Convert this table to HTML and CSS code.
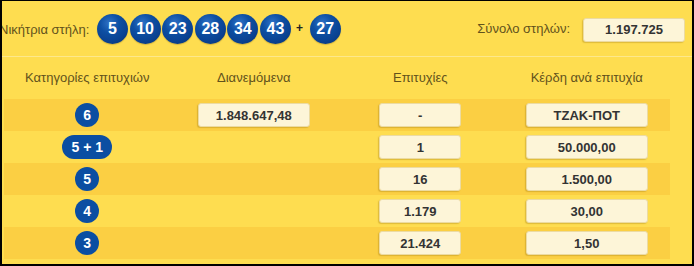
FILE: index.html
```html
<!DOCTYPE html>
<html lang="el">
<head>
<meta charset="utf-8">
<title>Κλήρωση</title>
<link rel="stylesheet" href="styles.css">
</head>
<body>
<div class="frame">
  <div class="topbar">
    <div class="label">Νικήτρια στήλη:</div>
    <div class="balls">
      <span class="ball">5</span>
      <span class="ball">10</span>
      <span class="ball">23</span>
      <span class="ball">28</span>
      <span class="ball">34</span>
      <span class="ball">43</span>
      <span class="plus">+</span>
      <span class="ball">27</span>
    </div>
    <div class="total">
      <span class="total-label">Σύνολο στηλών:</span>
      <span class="box total-box">1.197.725</span>
    </div>
  </div>
  <div class="table">
    <div class="row head">
      <div class="cell">Κατηγορίες επιτυχιών</div>
      <div class="cell">Διανεμόμενα</div>
      <div class="cell">Επιτυχίες</div>
      <div class="cell">Κέρδη ανά επιτυχία</div>
    </div>
    <div class="row dark">
      <div class="cell"><span class="badge">6</span></div>
      <div class="cell"><span class="box w-dist">1.848.647,48</span></div>
      <div class="cell"><span class="box w-hits">-</span></div>
      <div class="cell"><span class="box w-win">ΤΖΑΚ-ΠΟΤ</span></div>
    </div>
    <div class="row">
      <div class="cell"><span class="badge pill">5 + 1</span></div>
      <div class="cell"></div>
      <div class="cell"><span class="box w-hits">1</span></div>
      <div class="cell"><span class="box w-win">50.000,00</span></div>
    </div>
    <div class="row dark">
      <div class="cell"><span class="badge">5</span></div>
      <div class="cell"></div>
      <div class="cell"><span class="box w-hits">16</span></div>
      <div class="cell"><span class="box w-win">1.500,00</span></div>
    </div>
    <div class="row">
      <div class="cell"><span class="badge">4</span></div>
      <div class="cell"></div>
      <div class="cell"><span class="box w-hits">1.179</span></div>
      <div class="cell"><span class="box w-win">30,00</span></div>
    </div>
    <div class="row dark">
      <div class="cell"><span class="badge">3</span></div>
      <div class="cell"></div>
      <div class="cell"><span class="box w-hits">21.424</span></div>
      <div class="cell"><span class="box w-win">1,50</span></div>
    </div>
  </div>
</div>
</body>
</html>
```

FILE: styles.css
```css
* { box-sizing: border-box; }
html, body {
  margin: 0;
  padding: 0;
  background: #000;
}
body {
  width: 694px;
  height: 266px;
  overflow: hidden;
  font-family: "Liberation Sans", Arial, sans-serif;
}
.frame {
  width: 694px;
  height: 266px;
  background: #fedd50;
  border-top: 1px solid #000;
  border-left: 2px solid #000;
  border-right: 2px solid #000;
  border-bottom: 2px solid #000;
  overflow: hidden;
  display: flex;
  flex-direction: column;
}
.topbar {
  height: 56px;
  flex: 0 0 56px;
  display: flex;
  align-items: center;
  border-bottom: 1px solid #fde88c;
  padding-right: 7px;
}
.label {
  font-size: 13px;
  color: #62521c;
  margin-left: -3px;
  white-space: nowrap;
  width: 98px;
  margin-top: 1px;
}
.balls {
  display: flex;
  align-items: center;
  gap: 1.6px;
}
.ball {
  width: 31px;
  height: 30px;
  border-radius: 50%;
  background: radial-gradient(circle at 40% 30%, #2f72c6 0%, #0d4fa3 35%, #0a4292 65%, #072f6b 100%);
  color: #fff;
  font-weight: bold;
  font-size: 16px;
  display: flex;
  align-items: center;
  justify-content: center;
  box-shadow: 0 1px 1px rgba(90, 60, 0, 0.25);
}
.plus {
  width: 14px;
  margin: -2px 1.5px 0 0;
  text-align: center;
  font-weight: bold;
  font-size: 12px;
  color: #222;
}
.total {
  margin-left: auto;
  display: flex;
  align-items: center;
  gap: 13px;
}
.total-label {
  font-size: 13px;
  color: #62521c;
}
.box {
  display: inline-flex;
  align-items: center;
  justify-content: center;
  height: 24px;
  background: #fdf5d8;
  border: 1px solid #ecdba2;
  border-radius: 3px;
  box-shadow: -1px 1px 1px rgba(140, 100, 0, 0.28);
  font-weight: bold;
  font-size: 13px;
  color: #333;
}
.total-box {
  width: 102px;
  margin-top: 2px;
}
.table {
  margin: 0 22px 0 2px;
  display: flex;
  flex-direction: column;
}
.row {
  display: grid;
  grid-template-columns: repeat(4, 1fr);
  height: 32px;
  align-items: center;
}
.row.head {
  height: 42px;
  font-size: 13px;
  color: #62521c;
  padding-bottom: 2px;
}
.row.dark {
  background: #fbcf43;
}
.cell {
  display: flex;
  justify-content: center;
  align-items: center;
}
.badge {
  min-width: 24px;
  height: 24px;
  border-radius: 12px;
  background: #0b4ea2;
  color: #fff;
  font-weight: bold;
  font-size: 14px;
  display: inline-flex;
  align-items: center;
  justify-content: center;
  margin-top: -1px;
}
.badge.pill {
  width: 50px;
}
.w-dist { width: 112px; }
.w-hits { width: 82px; }
.w-win { width: 122px; }
```
